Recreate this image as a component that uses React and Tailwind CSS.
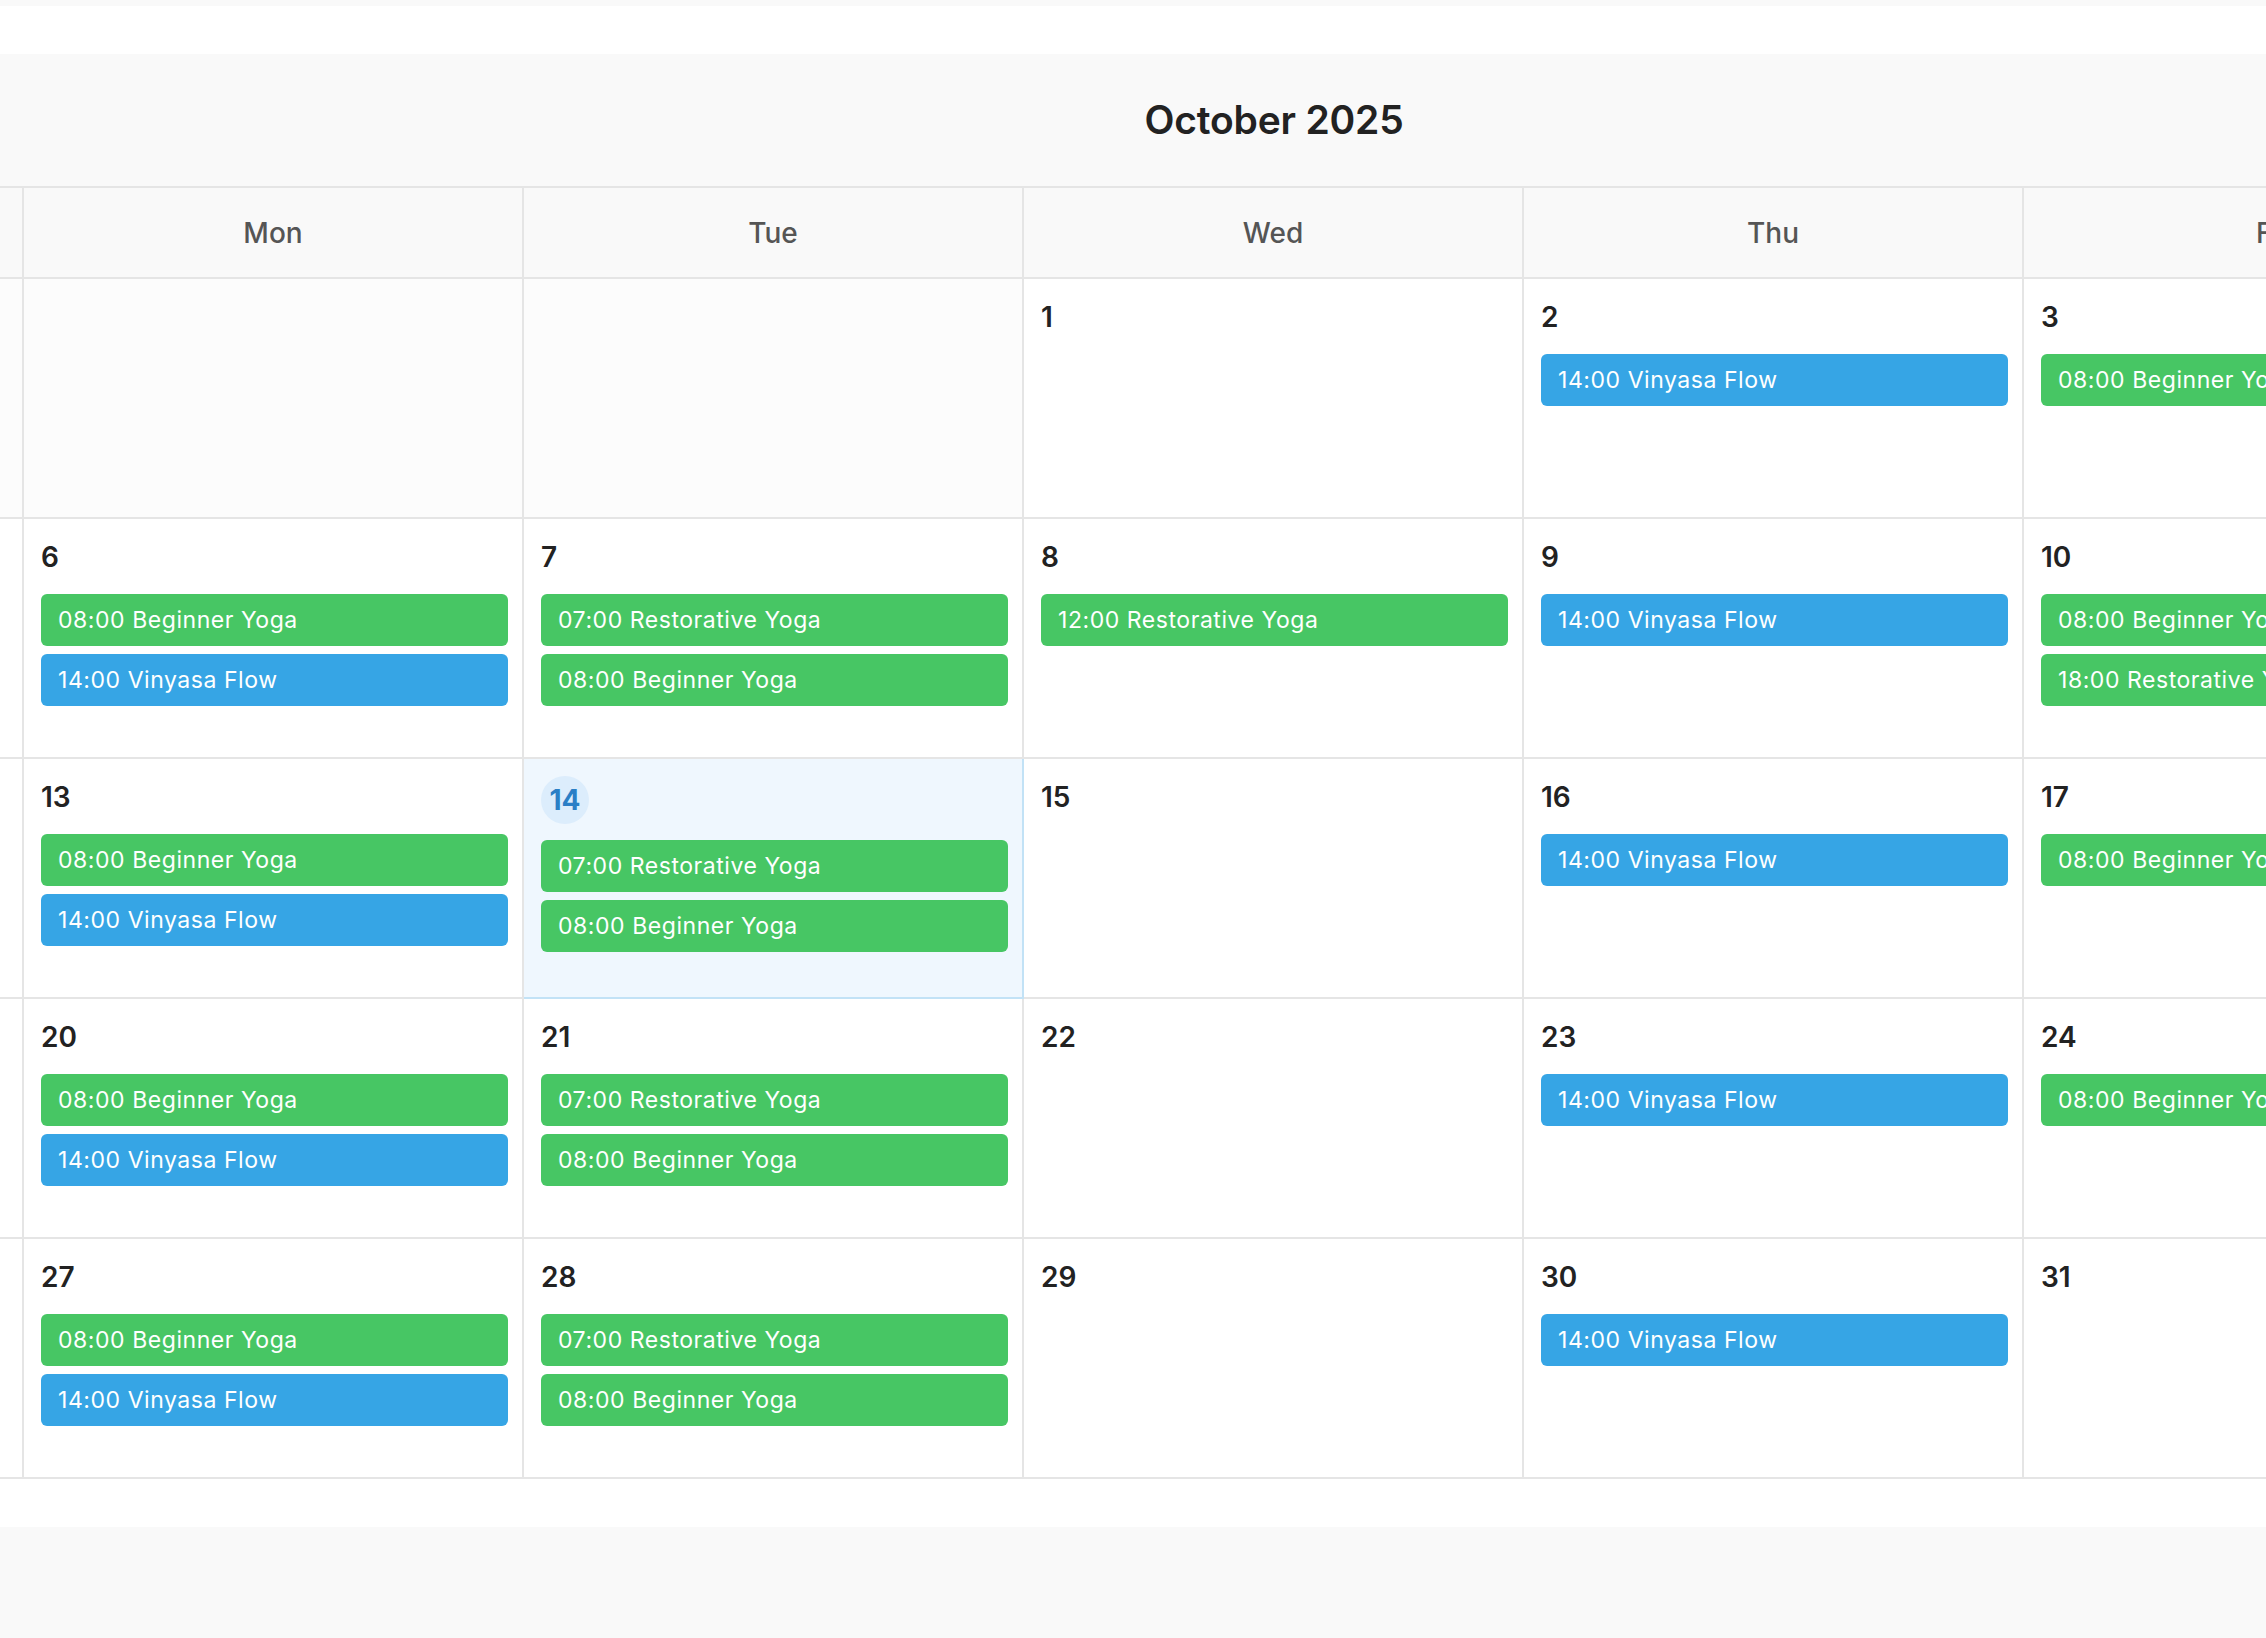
import React from "react";

const BY = { time: "08:00", title: "Beginner Yoga", color: "green" };
const VF = { time: "14:00", title: "Vinyasa Flow", color: "blue" };
const RY7 = { time: "07:00", title: "Restorative Yoga", color: "green" };

const events = {
  2: [VF],
  3: [BY],
  6: [BY, VF],
  7: [RY7, BY],
  8: [{ time: "12:00", title: "Restorative Yoga", color: "green" }],
  9: [VF],
  10: [BY, { time: "18:00", title: "Restorative Yoga", color: "green" }],
  13: [BY, VF],
  14: [RY7, BY],
  16: [VF],
  17: [BY],
  20: [BY, VF],
  21: [RY7, BY],
  23: [VF],
  24: [BY],
  27: [BY, VF],
  28: [RY7, BY],
  30: [VF],
};

const weekdays = ["Sun", "Mon", "Tue", "Wed", "Thu", "Fri", "Sat"];

// October 2025 starts on a Wednesday
const buildCells = () => {
  const cells = [];
  for (let i = 0; i < 3; i++) cells.push(null);
  for (let d = 1; d <= 31; d++) cells.push(d);
  while (cells.length % 7 !== 0) cells.push(null);
  return cells;
};

const EventPill = ({ ev }) => (
  <div
    className={
      "h-[52px] rounded-[6px] px-[17px] flex items-center text-white text-[23px] font-normal tracking-[0.55px] whitespace-nowrap overflow-hidden " +
      (ev.color === "green" ? "bg-[#47c664]" : "bg-[#36a5e5]")
    }
  >
    {ev.time} {ev.title}
  </div>
);

const DayCell = ({ day }) => {
  if (day === null) {
    return (
      <div className="h-[240px] border-r-2 border-b-2 border-[#e5e5e5] bg-[#fcfcfc]" />
    );
  }
  const isToday = day === 14;
  const list = events[day] || [];

  return (
    <div
      className={
        "h-[240px] border-r-2 border-b-2 pt-[17px] pl-[17px] pr-[14px] " +
        (isToday ? "bg-[#eff7fe] border-[#c2e2f6]" : "bg-white border-[#e5e5e5]")
      }
    >
      {isToday ? (
        <div className="w-[48px] h-[48px] rounded-full bg-[#dcedfc] flex items-center justify-center text-[28px] font-bold text-[#2a7fc6]">
          {day}
        </div>
      ) : (
        <div className="h-[42px] leading-[42px] text-[28px] font-semibold text-[#222222]">
          {day}
        </div>
      )}
      <div className="mt-[16px] flex flex-col gap-[8px]">
        {list.map((ev, i) => (
          <EventPill key={i} ev={ev} />
        ))}
      </div>
    </div>
  );
};

const App = () => {
  const cells = buildCells();

  return (
    <div
      className="min-h-screen w-full overflow-hidden bg-[#f9f9f9] pt-[6px]"
      style={{ fontFamily: "Inter, 'Noto Sans', sans-serif" }}
    >
      <div className="bg-white py-[48px]">
        <div className="w-[3500px] ml-[-476px]">
          <div className="h-[134px] bg-[#f9f9f9] border-b-2 border-[#e5e5e5] flex items-center justify-center">
            <h1 className="text-[39px] font-semibold text-[#222222] tracking-[-0.2px]">
              October 2025
            </h1>
          </div>

          <div className="grid grid-cols-7">
            {weekdays.map((w) => (
              <div
                key={w}
                className="h-[91px] bg-[#f9f9f9] border-r-2 border-b-2 border-[#e5e5e5] flex items-center justify-center text-[28px] font-medium text-[#555555]"
              >
                {w}
              </div>
            ))}
          </div>

          <div className="grid grid-cols-7">
            {cells.map((day, i) => (
              <DayCell key={i} day={day} />
            ))}
          </div>
        </div>
      </div>
    </div>
  );
};

export default App;
